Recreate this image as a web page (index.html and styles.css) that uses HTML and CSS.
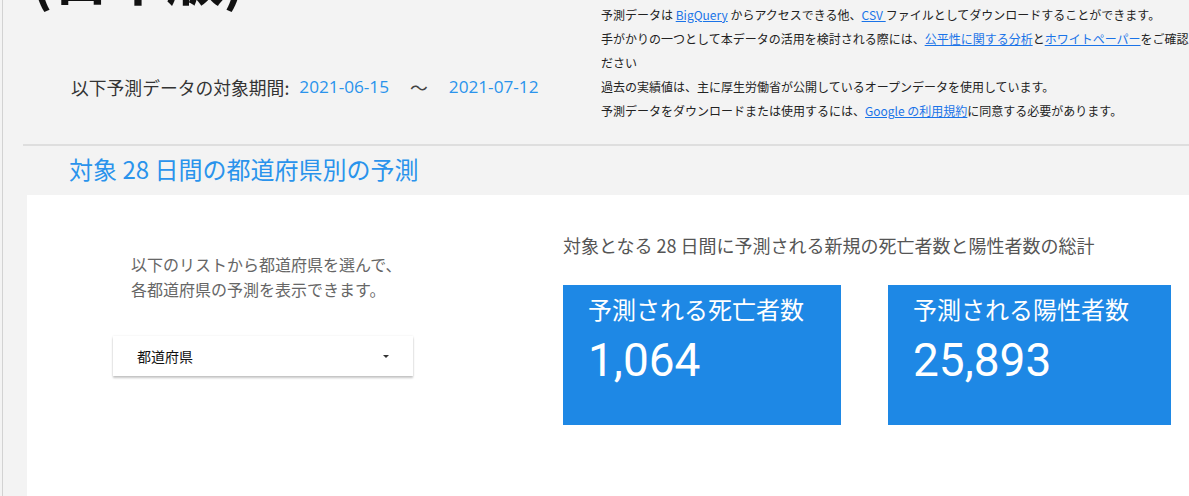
FILE: index.html
```html
<!DOCTYPE html>
<html lang="ja">
<head>
<meta charset="utf-8">
<title>COVID-19 感染予測 (日本版)</title>
<link rel="stylesheet" href="styles.css">
</head>
<body>
<div class="page">
  <header class="header">
    <div class="header-left">
      <h1 class="title">(日本版)</h1>
      <div class="period">
        <span class="period-label">以下予測データの対象期間:</span>
        <span class="date">2021-06-15</span>
        <span class="tilde">〜</span>
        <span class="date">2021-07-12</span>
      </div>
    </div>
    <div class="notes">
      <p>予測データは <a href="#">BigQuery</a> からアクセスできる他、<a href="#">CSV </a>ファイルとしてダウンロードすることができます。</p>
      <p>手がかりの一つとして本データの活用を検討される際には、<a href="#">公平性に関する分析</a>と<a href="#">ホワイトペーパー</a>をご確認ください</p>
      <p>過去の実績値は、主に厚生労働省が公開しているオープンデータを使用しています。</p>
      <p>予測データをダウンロードまたは使用するには、<a href="#">Google の利用規約</a>に同意する必要があります。</p>
    </div>
  </header>
  <hr class="rule">
  <h2 class="section-title">対象 28 日間の都道府県別の予測</h2>
  <section class="panel">
    <div class="panel-left">
      <p class="hint">以下のリストから都道府県を選んで、<br>各都道府県の予測を表示できます。</p>
      <div class="select">
        <span class="select-text">都道府県</span>
        <svg class="caret" width="10" height="5" viewBox="0 0 10 5"><path d="M2 1h6l-3 3z" fill="#333"/></svg>
      </div>
    </div>
    <div class="panel-right">
      <p class="totals-heading">対象となる 28 日間に予測される新規の死亡者数と陽性者数の総計</p>
      <div class="cards">
        <div class="card card-deaths">
          <div class="card-title">予測される死亡者数</div>
          <div class="card-number">1,064</div>
        </div>
        <div class="card card-cases">
          <div class="card-title">予測される陽性者数</div>
          <div class="card-number">25,893</div>
        </div>
      </div>
    </div>
  </section>
</div>
</body>
</html>
```
FILE: styles.css
```css
html, body {
  margin: 0;
  padding: 0;
}
body {
  background: #f3f3f3;
  overflow: hidden;
  height: 496px;
  padding-left: 2px;
  font-family: "Noto Sans CJK JP", sans-serif;
}
.page {
  border-left: 1px solid #d2d2d2;
  height: 496px;
  background: #f3f3f3;
}
.header {
  display: flex;
  height: 144px;
}
.header-left {
  width: 598px;
  flex-shrink: 0;
}
.title {
  margin: -56px 0 0 28px;
  font-size: 57px;
  line-height: 62px;
  font-weight: 700;
  color: #111;
}
.period {
  margin: 69px 0 0 68px;
  font-size: 17.8px;
  line-height: 24px;
  color: #333;
  display: flex;
  align-items: center;
}
.period-label {
  margin-right: 10px;
}
.date {
  font-family: "Open Sans", Roboto, sans-serif;
  color: #2a93ec;
  font-size: 17.2px;
}
.tilde {
  margin: 0 21px;
  color: #444;
}
.notes {
  width: 600px;
  flex-shrink: 0;
  padding-top: 3px;
  font-size: 12px;
  line-height: 24px;
  color: #222;
}
.notes p {
  margin: 0;
}
.notes a {
  color: #1a73e8;
  text-decoration: underline;
}
.rule {
  margin: 0 0 0 20px;
  border: 0;
  height: 2px;
  background: #dedede;
}
.section-title {
  margin: 0;
  height: 49px;
  padding-left: 66px;
  font-size: 24px;
  line-height: 46px;
  font-weight: 400;
  color: #2a93ec;
}
.panel {
  margin-left: 24px;
  background: #fff;
  height: 301px;
  display: flex;
}
.panel-left {
  width: 450px;
  padding-left: 86px;
  flex-shrink: 0;
}
.hint {
  margin: 57px 0 0 18px;
  font-size: 16px;
  line-height: 25px;
  color: #666;
}
.select {
  margin-top: 34px;
  width: 300px;
  height: 40px;
  background: #fff;
  box-shadow: 0 2px 2px rgba(0,0,0,0.22), 0 0 2px rgba(0,0,0,0.08);
  display: flex;
  align-items: center;
  justify-content: space-between;
  box-sizing: border-box;
  padding: 0 22px 0 24px;
}
.select-text {
  font-size: 14px;
  color: #111;
}
.caret {
  display: block;
}
.totals-heading {
  margin: 38px 0 0 0;
  font-size: 18px;
  line-height: 24px;
  color: #555;
}
.cards {
  display: flex;
  gap: 47px;
  margin-top: 28px;
}
.card {
  background: #1e88e5;
  height: 140px;
  box-sizing: border-box;
  padding: 9px 0 0 25px;
  color: #fff;
}
.card-deaths {
  width: 278px;
}
.card-cases {
  width: 283px;
}
.card-title {
  font-size: 24px;
  line-height: 30px;
}
.card-number {
  margin-top: 11px;
  font-family: Roboto, "Noto Sans CJK JP", sans-serif;
  font-size: 46px;
  line-height: 50px;
}
```
